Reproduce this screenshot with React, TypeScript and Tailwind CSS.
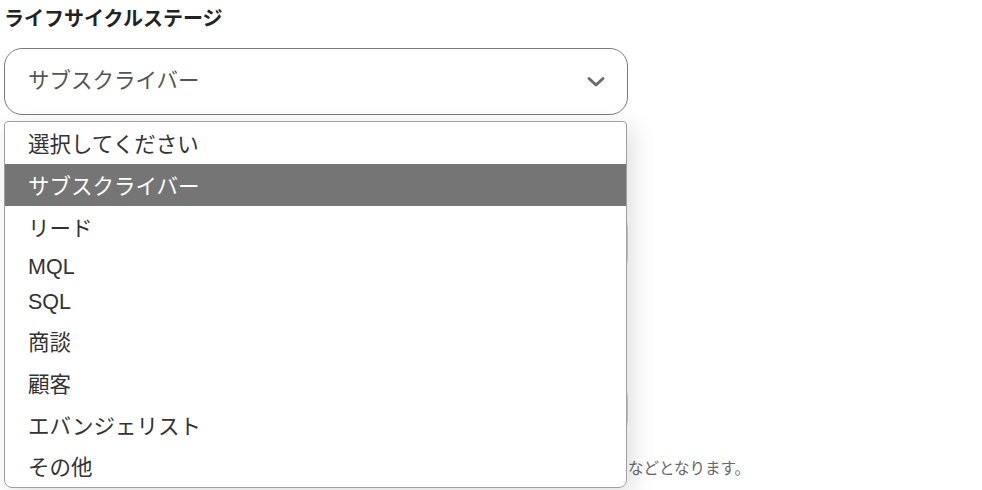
import React from "react";

const options = [
  { label: "選択してください", h: "h-[42px] pt-[4px]" },
  { label: "サブスクライバー", h: "h-[42px] pt-[4px]", active: true },
  { label: "リード", h: "h-[43px] pt-[4px]" },
  { label: "MQL", h: "h-[35px] pt-[2px]" },
  { label: "SQL", h: "h-[36px] pt-[1px]" },
  { label: "商談", h: "h-[43px] pt-[4px]" },
  { label: "顧客", h: "h-[41px] pt-[4px]" },
  { label: "エバンジェリスト", h: "h-[42px] pt-[4px]" },
  { label: "その他", h: "h-[41px] pt-[4px]" },
];

const itemFont = '"Liberation Sans", "Noto Sans CJK JP", sans-serif';

function Chevron() {
  return (
    <svg width="20" height="12" viewBox="0 0 20 12" fill="none">
      <path
        d="M3 2.5 L10 9 L17 2.5"
        stroke="#6b6b6b"
        strokeWidth="3"
        strokeLinecap="round"
        strokeLinejoin="round"
      />
    </svg>
  );
}

export default function App() {
  return (
    <div
      className="relative w-[982px] h-[490px] overflow-hidden bg-white text-[#333]"
      style={{ fontFamily: '"Noto Sans CJK JP", "Noto Sans", sans-serif' }}
    >
      <div className="pl-[4px] pt-[4px]">
        <h2 className="text-[20px] leading-[28px] font-bold text-[#222]">
          ライフサイクルステージ
        </h2>

        {/* select box */}
        <div className="mt-[16px] w-[624px] h-[67px] rounded-[18px] border border-[#7a7a7a] flex items-center justify-between pl-[23px] pr-[21px]">
          <span className="text-[21.5px] text-[#555]" style={{ fontFamily: itemFont }}>
            サブスクライバー
          </span>
          <Chevron />
        </div>

        {/* content behind the open list */}
        <div className="mt-[100px] w-[624px] h-[56px] rounded-[12px] border border-[#cfcfcf]" />
        <div className="mt-[114px] w-[624px] h-[48px] rounded-[12px] border border-[#cfcfcf]" />
        <div className="mt-[22px] flex text-[15.5px] text-[#666] leading-[24px]">
          <span className="w-[624px] shrink-0" />
          <span>などとなります。</span>
        </div>
      </div>

      {/* open option list */}
      <ul className="absolute left-[4px] top-[121px] w-[623px] border border-[#a0a0a0] rounded-b-[8px] rounded-t-[4px] bg-white overflow-hidden shadow-[6px_6px_24px_rgba(0,0,0,0.13)]">
        {options.map((o, i) => (
          <li
            key={i}
            className={`${o.h} flex items-center pl-[23px] text-[21.5px] ${
              o.active ? "bg-[#757575] text-white" : "text-[#333]"
            }`}
            style={{ fontFamily: itemFont }}
          >
            {o.label}
          </li>
        ))}
      </ul>
    </div>
  );
}
